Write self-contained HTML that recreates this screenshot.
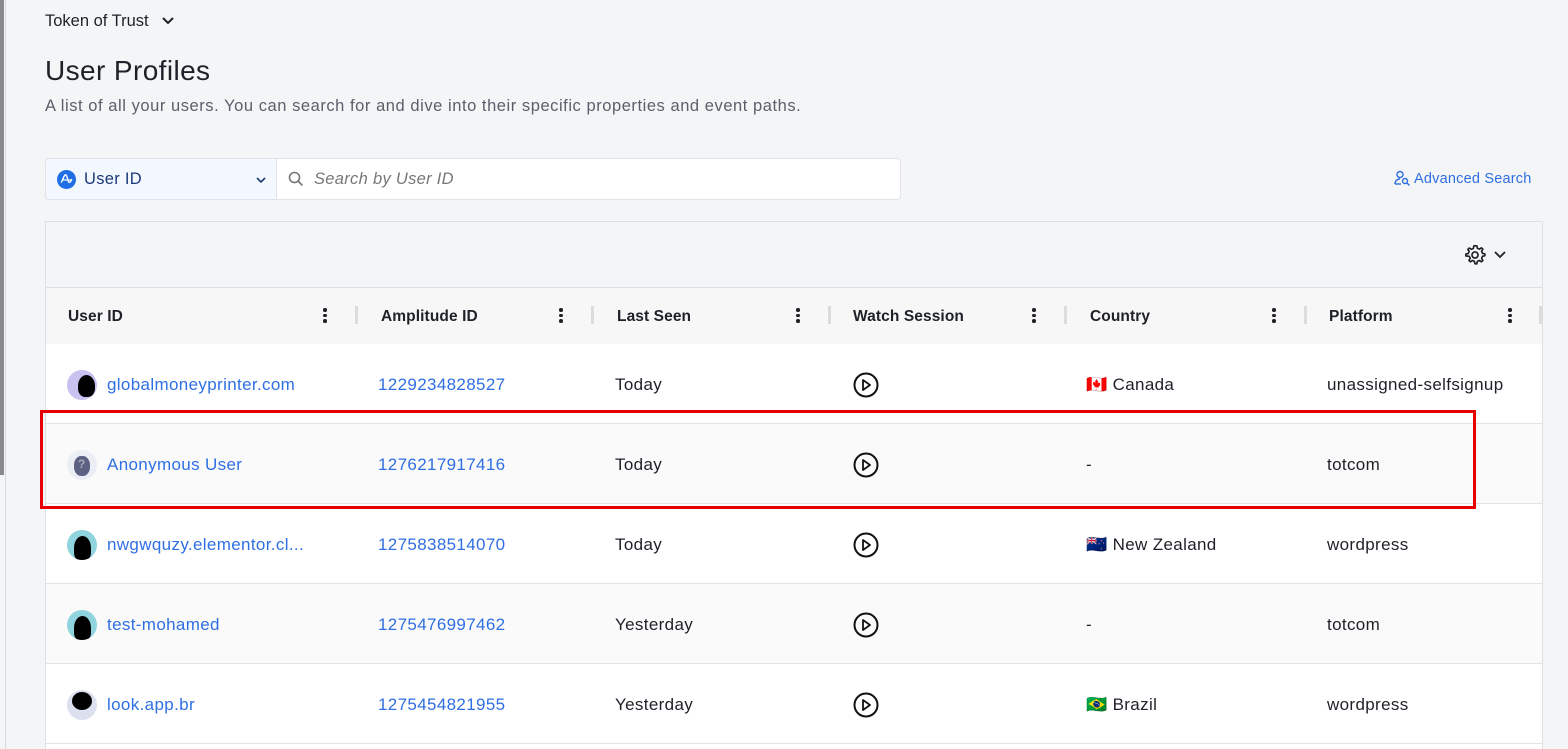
<!DOCTYPE html>
<html><head><style>
*{box-sizing:border-box;margin:0;padding:0}
html,body{width:1568px;height:749px;overflow:hidden}
body{background:#f4f5f7;font-family:"Liberation Sans",sans-serif;color:#1e2128;position:relative}
.lbar{position:absolute;left:0;top:0;width:4px;height:475px;background:#8a8a8a}
.lline{position:absolute;left:5px;top:0;width:1px;height:749px;background:#d8dadf}
.ws{position:absolute;left:45px;top:12px;font-size:16.5px;color:#1e2128}
h1{position:absolute;left:45px;top:55px;font-size:28px;font-weight:400;color:#1e2128;letter-spacing:.4px}
.sub{position:absolute;left:45px;top:97px;font-size:16.5px;color:#5a5f6b;letter-spacing:.55px}
.sel{position:absolute;left:45px;top:158px;width:232px;height:42px;background:#f3f8fe;border:1px solid #dfe2e7;border-radius:4px 0 0 4px}
.inp{position:absolute;left:276px;top:158px;width:625px;height:42px;background:#fff;border:1px solid #dfe2e7;border-radius:0 4px 4px 0}
.adv{position:absolute;left:1394px;top:170px;font-size:14.5px;color:#2f6fe4;letter-spacing:.2px}
.tbl{position:absolute;left:45px;top:221px;width:1498px;height:540px;border:1px solid #dcdfe4;background:#fff}
.tool{height:66px;background:#f4f5f7;border-bottom:1px solid #dcdfe4}
.hdr{height:56px;background:#f7f7f7;position:relative}
.row{height:80px;border-bottom:1px solid #e2e4e8;position:relative}
.row.alt{background:#fafafa}
.c{position:absolute;top:1px;height:100%;display:flex;align-items:center;font-size:17px;letter-spacing:.35px}
.hdr .c{font-weight:700;font-size:15.5px;letter-spacing:.1px}
.dots{position:absolute;top:20px;width:4px}
.dots i{display:block;width:3.5px;height:3.5px;background:#1e2128;border-radius:50%;margin-bottom:2px}
.sep{position:absolute;top:18px;width:3px;height:18px;background:#dcdcdc}
.link{color:#2f6fe4}
.av{width:30px;height:30px;border-radius:50%;margin-right:10px;position:relative;overflow:hidden;flex:none}
.red{position:absolute;left:40px;top:410px;width:1436px;height:99px;border:3px solid #e60000}
</style></head><body>
<div class="lbar"></div><div class="lline"></div>
<div class="ws">Token of Trust <svg width="14" height="10" viewBox="0 0 14 10" style="margin-left:8px"><path d="M2 2l5 5 5-5" fill="none" stroke="#1e2128" stroke-width="2"/></svg></div>
<h1>User Profiles</h1>
<div class="sub">A list of all your users. You can search for and dive into their specific properties and event paths.</div>
<div class="sel"><svg style="position:absolute;left:11px;top:11px" width="19" height="19" viewBox="0 0 20 20"><circle cx="10" cy="10" r="10" fill="#1f6ee5"/><path d="M4 13c2 0 3-8 5-8s2 8 4 8 1-3 3-3" fill="none" stroke="#fff" stroke-width="1.5"/><path d="M5 10.5h10" stroke="#fff" stroke-width="1.2"/></svg><span style="position:absolute;left:38px;top:11px;font-size:16.5px;color:#1c3a7a;letter-spacing:.3px">User ID</span><svg style="position:absolute;left:210px;top:17px" width="10" height="8" viewBox="0 0 10 8"><path d="M1 2l4 4 4-4" fill="none" stroke="#1c3a7a" stroke-width="1.6"/></svg></div>
<div class="inp"><svg style="position:absolute;left:11px;top:12px" width="16" height="16" viewBox="0 0 16 16"><circle cx="6.5" cy="6.5" r="5" fill="none" stroke="#777" stroke-width="1.6"/><path d="M10 10l4.5 4.5" stroke="#777" stroke-width="1.6"/></svg><span style="position:absolute;left:37px;top:11px;font-size:16.5px;color:#777;font-style:italic;letter-spacing:.3px">Search by User ID</span></div>
<div class="adv"><svg width="17" height="16" viewBox="0 0 17 16" style="vertical-align:-3px;margin-right:3px"><circle cx="6" cy="4.5" r="3" fill="none" stroke="#2f6fe4" stroke-width="1.4"/><path d="M1 14c0-3 2-5 5-5" fill="none" stroke="#2f6fe4" stroke-width="1.4"/><path d="M1 14h6" stroke="#2f6fe4" stroke-width="1.4"/><circle cx="11" cy="11" r="2.5" fill="none" stroke="#2f6fe4" stroke-width="1.4"/><path d="M13 13l2.5 2.5" stroke="#2f6fe4" stroke-width="1.4"/></svg>Advanced Search</div>
<div class="tbl">
<div class="tool"><svg style="position:absolute;left:1418px;top:22px" width="22" height="22" viewBox="0 0 24 24"><path d="M12 2l2 0 .6 2.6 2.2 1 2.3-1.4 1.5 1.5-1.4 2.3 1 2.2 2.6.6v2l-2.6.6-1 2.2 1.4 2.3-1.5 1.5-2.3-1.4-2.2 1-.6 2.6h-2l-.6-2.6-2.2-1-2.3 1.4-1.5-1.5 1.4-2.3-1-2.2L2 13v-2l2.6-.6 1-2.2-1.4-2.3 1.5-1.5 2.3 1.4 2.2-1L10.8 2z" fill="none" stroke="#1e2128" stroke-width="1.8" stroke-linejoin="round"/><circle cx="12" cy="12" r="3.3" fill="none" stroke="#1e2128" stroke-width="1.8"/></svg><svg style="position:absolute;left:1447px;top:28px" width="14" height="10" viewBox="0 0 14 10"><path d="M2 2l5 5 5-5" fill="none" stroke="#1e2128" stroke-width="1.8"/></svg></div>
<div class="hdr">
<div class="c" style="left:22px">User ID</div><div class="dots" style="left:277px"><i></i><i></i><i></i></div><div class="sep" style="left:309px"></div>
<div class="c" style="left:335px">Amplitude ID</div><div class="dots" style="left:513px"><i></i><i></i><i></i></div><div class="sep" style="left:545px"></div>
<div class="c" style="left:571px">Last Seen</div><div class="dots" style="left:750px"><i></i><i></i><i></i></div><div class="sep" style="left:782px"></div>
<div class="c" style="left:807px">Watch Session</div><div class="dots" style="left:986px"><i></i><i></i><i></i></div><div class="sep" style="left:1018px"></div>
<div class="c" style="left:1044px">Country</div><div class="dots" style="left:1226px"><i></i><i></i><i></i></div><div class="sep" style="left:1258px"></div>
<div class="c" style="left:1283px">Platform</div><div class="dots" style="left:1462px"><i></i><i></i><i></i></div><div class="sep" style="left:1493px"></div>
</div>
<div class="row">
<div class="c" style="left:21px"><div class="av" style="background:#c9c1ef"><div style="position:absolute;left:11px;top:5px;width:17px;height:22px;background:#000;border-radius:50% 50% 40% 40%"></div></div><span class="link">globalmoneyprinter.com</span></div>
<div class="c link" style="left:332px">1229234828527</div>
<div class="c" style="left:569px">Today</div>
<div class="c" style="left:807px"><svg width="26" height="26" viewBox="0 0 26 26"><circle cx="13" cy="13" r="11.5" fill="none" stroke="#111" stroke-width="2"/><path d="M10 8l7 5-7 5z" fill="none" stroke="#111" stroke-width="1.8" stroke-linejoin="round"/></svg></div>
<div class="c" style="left:1040px">🇨🇦&nbsp;Canada</div>
<div class="c" style="left:1281px">unassigned-selfsignup</div>
</div>
<div class="row alt">
<div class="c" style="left:21px"><div class="av" style="background:#eceef5"><div style="position:absolute;left:7px;top:6px;width:16px;height:20px;background:#5d6284;border-radius:45%"></div><span style="position:absolute;left:11px;top:7px;color:#aab;font-size:12px;font-weight:700">?</span></div><span class="link">Anonymous User</span></div>
<div class="c link" style="left:332px">1276217917416</div>
<div class="c" style="left:569px">Today</div>
<div class="c" style="left:807px"><svg width="26" height="26" viewBox="0 0 26 26"><circle cx="13" cy="13" r="11.5" fill="none" stroke="#111" stroke-width="2"/><path d="M10 8l7 5-7 5z" fill="none" stroke="#111" stroke-width="1.8" stroke-linejoin="round"/></svg></div>
<div class="c" style="left:1040px">-</div>
<div class="c" style="left:1281px">totcom</div>
</div>
<div class="row">
<div class="c" style="left:21px"><div class="av" style="background:#8fd4df"><div style="position:absolute;left:7px;top:6px;width:17px;height:24px;background:#000;border-radius:50% 50% 30% 30%"></div></div><span class="link">nwgwquzy.elementor.cl...</span></div>
<div class="c link" style="left:332px">1275838514070</div>
<div class="c" style="left:569px">Today</div>
<div class="c" style="left:807px"><svg width="26" height="26" viewBox="0 0 26 26"><circle cx="13" cy="13" r="11.5" fill="none" stroke="#111" stroke-width="2"/><path d="M10 8l7 5-7 5z" fill="none" stroke="#111" stroke-width="1.8" stroke-linejoin="round"/></svg></div>
<div class="c" style="left:1040px">🇳🇿&nbsp;New Zealand</div>
<div class="c" style="left:1281px">wordpress</div>
</div>
<div class="row alt">
<div class="c" style="left:21px"><div class="av" style="background:#8fd4df"><div style="position:absolute;left:7px;top:6px;width:17px;height:24px;background:#000;border-radius:50% 50% 30% 30%"></div></div><span class="link">test-mohamed</span></div>
<div class="c link" style="left:332px">1275476997462</div>
<div class="c" style="left:569px">Yesterday</div>
<div class="c" style="left:807px"><svg width="26" height="26" viewBox="0 0 26 26"><circle cx="13" cy="13" r="11.5" fill="none" stroke="#111" stroke-width="2"/><path d="M10 8l7 5-7 5z" fill="none" stroke="#111" stroke-width="1.8" stroke-linejoin="round"/></svg></div>
<div class="c" style="left:1040px">-</div>
<div class="c" style="left:1281px">totcom</div>
</div>
<div class="row">
<div class="c" style="left:21px"><div class="av" style="background:#dde1ef"><div style="position:absolute;left:5px;top:2px;width:20px;height:18px;background:#000;border-radius:50%"></div></div><span class="link">look.app.br</span></div>
<div class="c link" style="left:332px">1275454821955</div>
<div class="c" style="left:569px">Yesterday</div>
<div class="c" style="left:807px"><svg width="26" height="26" viewBox="0 0 26 26"><circle cx="13" cy="13" r="11.5" fill="none" stroke="#111" stroke-width="2"/><path d="M10 8l7 5-7 5z" fill="none" stroke="#111" stroke-width="1.8" stroke-linejoin="round"/></svg></div>
<div class="c" style="left:1040px">🇧🇷&nbsp;Brazil</div>
<div class="c" style="left:1281px">wordpress</div>
</div>
</div>
<div class="red"></div>
</body></html>
